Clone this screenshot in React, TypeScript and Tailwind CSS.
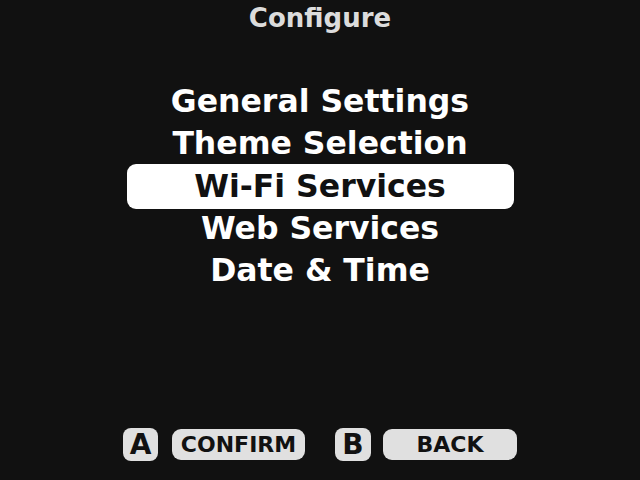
import React from "react";

const items = ["General Settings", "Theme Selection", "Wi-Fi Services", "Web Services", "Date & Time"];

export default function App() {
  return (
    <div
      className="w-[640px] h-[480px] bg-[#111111] flex flex-col items-center overflow-hidden"
      style={{ fontFamily: '"DejaVu Sans", sans-serif' }}
    >
      <div className="mt-[2px] h-[32px] text-[26px] leading-[32px] font-bold text-[#dcdcdc]">Configure</div>
      <div className="mt-[47px] flex flex-col items-center">
        {items.map((t, i) => (
          <div
            key={t}
            className={
              i === 2
                ? "w-[387px] h-[45px] rounded-[9px] bg-white text-[#111111] flex items-center justify-center text-[31.5px] font-bold leading-none -mt-[1px] -mb-[1px]"
                : "h-[42px] text-white flex items-center justify-center text-[31.5px] font-bold leading-none"
            }
          >
            {t}
          </div>
        ))}
      </div>
      <div className="mt-auto mb-[19px] flex items-center text-[#111111] font-bold">
        <div className="w-[35px] h-[33px] rounded-[8px] bg-[#e0e0e0] flex items-center justify-center text-[28px]">A</div>
        <div className="ml-[14px] w-[133px] h-[31px] rounded-[9px] bg-[#e0e0e0] flex items-center justify-center text-[22px]">CONFIRM</div>
        <div className="ml-[30px] w-[36px] h-[33px] rounded-[8px] bg-[#e0e0e0] flex items-center justify-center text-[28px]">B</div>
        <div className="ml-[12px] w-[134px] h-[31px] rounded-[9px] bg-[#e0e0e0] flex items-center justify-center text-[22px]">BACK</div>
      </div>
    </div>
  );
}
